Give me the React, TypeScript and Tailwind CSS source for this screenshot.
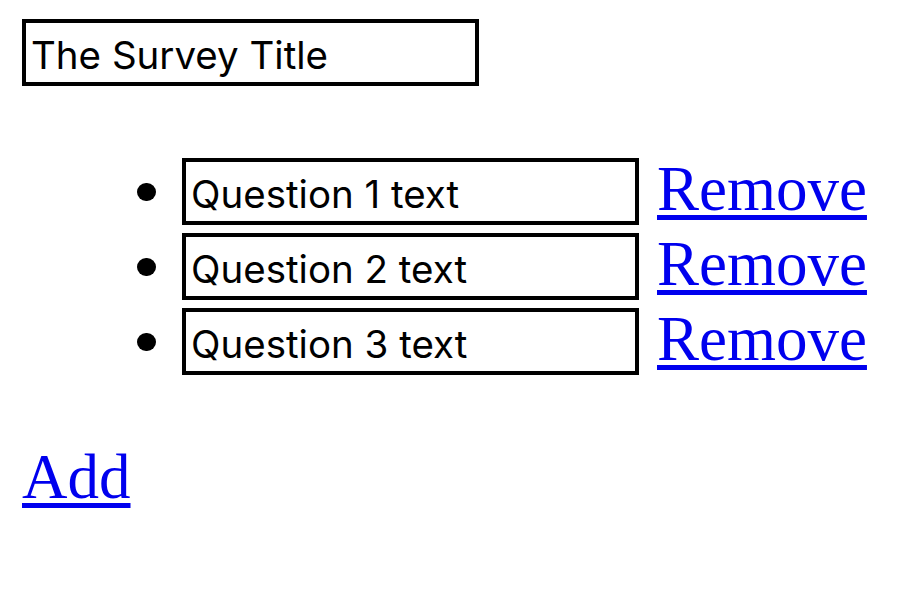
const questions = ["Question 1 text", "Question 2 text", "Question 3 text"];

const inputCls =
  "w-[457px] h-[67px] border-[4px] border-black bg-white pl-[5px] pt-[5px] text-[38.5px] text-black outline-none font-['Inter',sans-serif]";

const linkCls =
  "text-[63px] leading-none text-[#0000ee] underline decoration-[5px] underline-offset-[5px] font-['Liberation_Serif',serif]";

export default function App() {
  return (
    <div className="min-h-[599px] bg-white pl-[22px] pt-[19px]">
      <input className={inputCls} defaultValue="The Survey Title" />

      <ul className="mt-[72px] flex flex-col gap-[8px] pl-[115px]">
        {questions.map((q) => (
          <li key={q} className="flex items-center h-[67px]">
            <span className="w-[19px] h-[18px] rounded-full bg-black mr-[26px]" />
            <input className={inputCls} defaultValue={q} />
            <a href="#" className={linkCls + " ml-[18px] -mt-[4px]"}>
              Remove
            </a>
          </li>
        ))}
      </ul>

      <div className="mt-[71px]">
        <a href="#" className={linkCls}>
          Add
        </a>
      </div>
    </div>
  );
}
